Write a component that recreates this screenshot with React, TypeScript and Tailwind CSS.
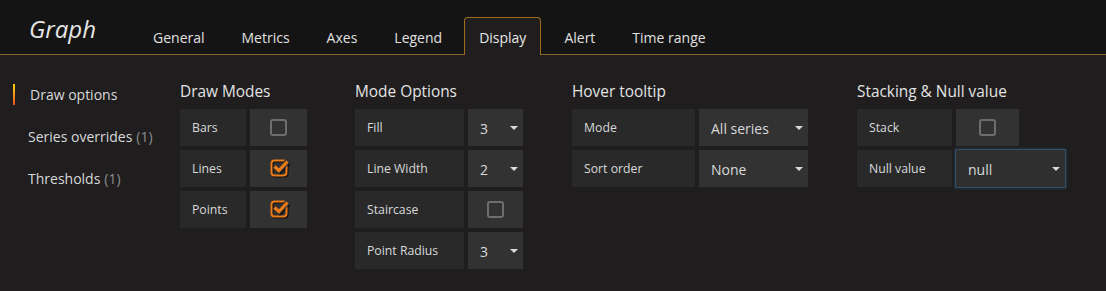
import React from "react"

const tabs = ["General", "Metrics", "Axes", "Legend", "Display", "Alert", "Time range"]

const Caret = () => (
  <svg width="8" height="5" viewBox="0 0 8 5" className="absolute right-[5px] top-1/2 -translate-y-1/2">
    <path d="M0 0.5 L8 0.5 L4 4.5 Z" fill="#d8d9da" />
  </svg>
)

const Unchecked = () => <div className="h-[17px] w-[17px] rounded-[3px] border-2 border-[#6e6e6e]" />

const Checked = () => (
  <svg width="19" height="19" viewBox="0 0 19 19" className="ml-[2px] -mt-[2px] drop-shadow-[1px_1px_0_rgba(0,0,0,0.7)]">
    <rect x="1.5" y="2.5" width="15" height="15" rx="3" fill="none" stroke="#eb7b18" strokeWidth="2" />
    <path d="M4.5 8.5 L8.8 12.5 L17.5 3.5" fill="none" stroke="#323232" strokeWidth="5.5" />
    <path d="M4.5 8.5 L8.8 12.5 L17.5 3.5" fill="none" stroke="#eb7b18" strokeWidth="3.2" />
  </svg>
)

const Label = ({ w, children }: { w: string; children: React.ReactNode }) => (
  <div className={`${w} flex h-[37px] items-center bg-[#292929] px-3 pt-px text-[12.25px] text-[#d8d9da]`}>{children}</div>
)

const Select = ({ w, value }: { w: string; value: string }) => (
  <div className={`${w} relative flex h-[37px] items-center bg-[#323232] pl-3 pt-px text-[14px] text-[#d8d9da]`}>
    {value}
    <Caret />
  </div>
)

const CheckCell = ({ w, checked }: { w: string; checked?: boolean }) => (
  <div className={`${w} flex h-[37px] items-center justify-center bg-[#323232]`}>
    {checked ? <Checked /> : <Unchecked />}
  </div>
)

const Heading = ({ children }: { children: React.ReactNode }) => (
  <div className="mb-[7px] h-[20px] text-[15.4px] leading-[20px] text-[#e3e3e3]">{children}</div>
)

export default function App() {
  return (
    <div className="h-[291px] w-[1106px] overflow-hidden bg-[#1f1d1e]" style={{ fontFamily: '"Open Sans", sans-serif' }}>
      {/* header with tabs */}
      <div className="flex h-[55px] items-end border-b border-[#86692a] bg-[#141414]">
        <div className="mb-[10px] ml-[29px] w-[109px] text-[24px] italic leading-[30px] text-[#e6e6e6]">Graph</div>
        <div className="-mb-px flex items-end">
          {tabs.map((t) =>
            t === "Display" ? (
              <div
                key={t}
                className="mr-[8px] flex h-[38px] items-center rounded-t-[4px] border border-b-0 border-[#a06a1c] bg-[#1f1d1e] px-[14px] pt-[2px] text-[14px] text-[#e8e8e8]"
              >
                {t}
              </div>
            ) : (
              <div key={t} className="mr-[7px] flex h-[38px] items-center border border-transparent px-[14px] pt-[2px] text-[14px] text-[#e0e0e0]">
                {t}
              </div>
            )
          )}
        </div>
      </div>

      <div className="flex">
        {/* side nav */}
        <div className="w-[180px] pt-[18px] text-[14px] text-[#d8d9da]">
          <div className="flex h-[42px] items-center">
            <div className="ml-[13px] h-[21px] w-[2px] bg-gradient-to-b from-[#ffd500] to-[#e8501b]" />
            <span className="ml-[15px]">Draw options</span>
          </div>
          <div className="flex h-[42px] items-center pl-[28px]">
            Series overrides <span className="ml-1 text-[#8e8e8e]">(1)</span>
          </div>
          <div className="flex h-[42px] items-center pl-[28px]">
            Thresholds <span className="ml-1 text-[#8e8e8e]">(1)</span>
          </div>
        </div>

        {/* sections */}
        <div className="flex pt-[27px]">
          <div className="w-[175px]">
            <Heading>Draw Modes</Heading>
            <div className="flex flex-col gap-[4px]">
              <div className="flex gap-[4px]">
                <Label w="w-[66px]">Bars</Label>
                <CheckCell w="w-[57px]" />
              </div>
              <div className="flex gap-[4px]">
                <Label w="w-[66px]">Lines</Label>
                <CheckCell w="w-[57px]" checked />
              </div>
              <div className="flex gap-[4px]">
                <Label w="w-[66px]">Points</Label>
                <CheckCell w="w-[57px]" checked />
              </div>
            </div>
          </div>

          <div className="w-[217px]">
            <Heading>Mode Options</Heading>
            <div className="flex flex-col gap-[4px]">
              <div className="flex gap-[4px]">
                <Label w="w-[109px]">Fill</Label>
                <Select w="w-[55px]" value="3" />
              </div>
              <div className="flex gap-[4px]">
                <Label w="w-[109px]">Line Width</Label>
                <Select w="w-[55px]" value="2" />
              </div>
              <div className="flex gap-[4px]">
                <Label w="w-[109px]">Staircase</Label>
                <CheckCell w="w-[55px]" />
              </div>
              <div className="flex gap-[4px]">
                <Label w="w-[109px]">Point Radius</Label>
                <Select w="w-[55px]" value="3" />
              </div>
            </div>
          </div>

          <div className="w-[285px]">
            <Heading>Hover tooltip</Heading>
            <div className="flex flex-col gap-[4px]">
              <div className="flex gap-[4px]">
                <Label w="w-[123px]">Mode</Label>
                <Select w="w-[109px]" value="All series" />
              </div>
              <div className="flex gap-[4px]">
                <Label w="w-[123px]">Sort order</Label>
                <Select w="w-[109px]" value="None" />
              </div>
            </div>
          </div>

          <div>
            <Heading>Stacking &amp; Null value</Heading>
            <div className="flex flex-col gap-[4px]">
              <div className="flex gap-[4px]">
                <Label w="w-[95px]">Stack</Label>
                <CheckCell w="w-[63px]" />
              </div>
              <div className="flex gap-[3px]">
                <Label w="w-[95px]">Null value</Label>
                <div className="relative -mt-px flex h-[39px] w-[111px] items-center border border-[#33506a] bg-[#2f2f2f] pl-3 pt-px text-[14px] text-[#d8d9da] shadow-[0_0_3px_rgba(60,110,160,0.45)]">
                  null
                  <Caret />
                </div>
              </div>
            </div>
          </div>
        </div>
      </div>
    </div>
  )
}
